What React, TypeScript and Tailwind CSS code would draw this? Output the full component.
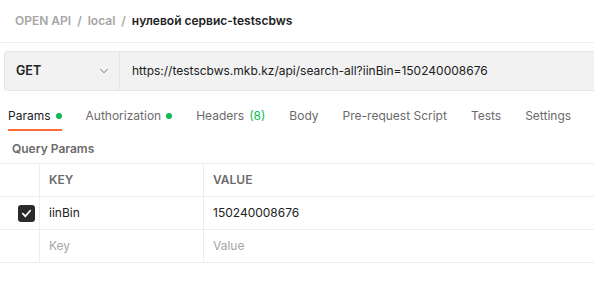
import { ChevronDown } from 'lucide-react'

const tabs = [
  { label: 'Params', dot: true, active: true },
  { label: 'Authorization', dot: true },
  { label: 'Headers', count: '(8)' },
  { label: 'Body' },
  { label: 'Pre-request Script' },
  { label: 'Tests' },
  { label: 'Settings' },
]

export default function App() {
  return (
    <div className="w-[594px] h-[293px] overflow-hidden bg-white text-[12px] text-[#212121]" style={{ fontFamily: 'Inter, "Noto Sans", sans-serif' }}>
      {/* Breadcrumb */}
      <div className="h-[43px] flex items-center pl-[15px] border-b border-[#ededed] text-[12px] font-semibold">
        <span className="text-[#a6a6a6]">OPEN API</span>
        <span className="text-[#a6a6a6] mx-[6px]">/</span>
        <span className="text-[#a6a6a6]">local</span>
        <span className="text-[#a6a6a6] mx-[6px]">/</span>
        <span>нулевой сервис-testscbws</span>
      </div>

      {/* Request bar */}
      <div className="pl-[4px] pt-[8px]">
        <div className="flex h-[40px] bg-[#f2f2f2] border border-r-0 border-[#e6e6e6] rounded-l-[4px]">
          <div className="w-[115px] flex items-center justify-between pl-[11px] pr-[8px] border-r border-[#e6e6e6]">
            <span className="font-semibold text-[12.5px]">GET</span>
            <ChevronDown size={14} strokeWidth={1.5} className="text-[#6b6b6b]" />
          </div>
          <div className="flex items-center pl-[12px] whitespace-nowrap">
            https://testscbws.mkb.kz/api/search-all?iinBin=150240008676
          </div>
        </div>
      </div>

      {/* Tabs */}
      <div className="flex px-[8px] gap-[24px] h-[40px] whitespace-nowrap">
        {tabs.map((t) => (
          <div
            key={t.label}
            className={
              'flex items-center gap-[5px] pt-[11px] border-b-[2px] ' +
              (t.active ? 'border-[#ff6c37] text-[#212121]' : 'border-transparent text-[#6b6b6b]')
            }
          >
            <span>{t.label}</span>
            {t.count && <span className="text-[#0cbb52]">{t.count}</span>}
            {t.dot && <span className="w-[6px] h-[6px] rounded-full bg-[#0cbb52]" />}
          </div>
        ))}
      </div>

      {/* Query Params */}
      <div className="h-[32px] flex items-center pl-[12px] pt-[3px] text-[12px] font-semibold text-[#6b6b6b]">
        Query Params
      </div>

      <div className="border-t border-[#ededed]">
        <div className="grid grid-cols-[40px_164px_1fr] h-[33px] border-b border-[#ededed] text-[12px] font-semibold text-[#6b6b6b]">
          <div className="border-r border-[#ededed]" />
          <div className="flex items-center pl-[9px] border-r border-[#ededed]">KEY</div>
          <div className="flex items-center pl-[9px]">VALUE</div>
        </div>
        <div className="grid grid-cols-[40px_164px_1fr] h-[33px] border-b border-[#ededed]">
          <div className="flex items-center justify-end pr-[4px] border-r border-[#ededed]">
            <div className="w-[17px] h-[17px] rounded-[3px] bg-[#2b2b2b] flex items-center justify-center">
              <svg width="11" height="11" viewBox="0 0 12 12" fill="none">
                <path d="M2 6.2 L4.8 9 L10 3" stroke="white" strokeWidth="2" strokeLinecap="round" strokeLinejoin="round" />
              </svg>
            </div>
          </div>
          <div className="flex items-center pl-[9px] border-r border-[#ededed]">iinBin</div>
          <div className="flex items-center pl-[9px]">150240008676</div>
        </div>
        <div className="grid grid-cols-[40px_164px_1fr] h-[33px] border-b border-[#ededed] text-[#a6a6a6]">
          <div className="border-r border-[#ededed]" />
          <div className="flex items-center pl-[9px] border-r border-[#ededed]">Key</div>
          <div className="flex items-center pl-[9px]">Value</div>
        </div>
      </div>
    </div>
  )
}
